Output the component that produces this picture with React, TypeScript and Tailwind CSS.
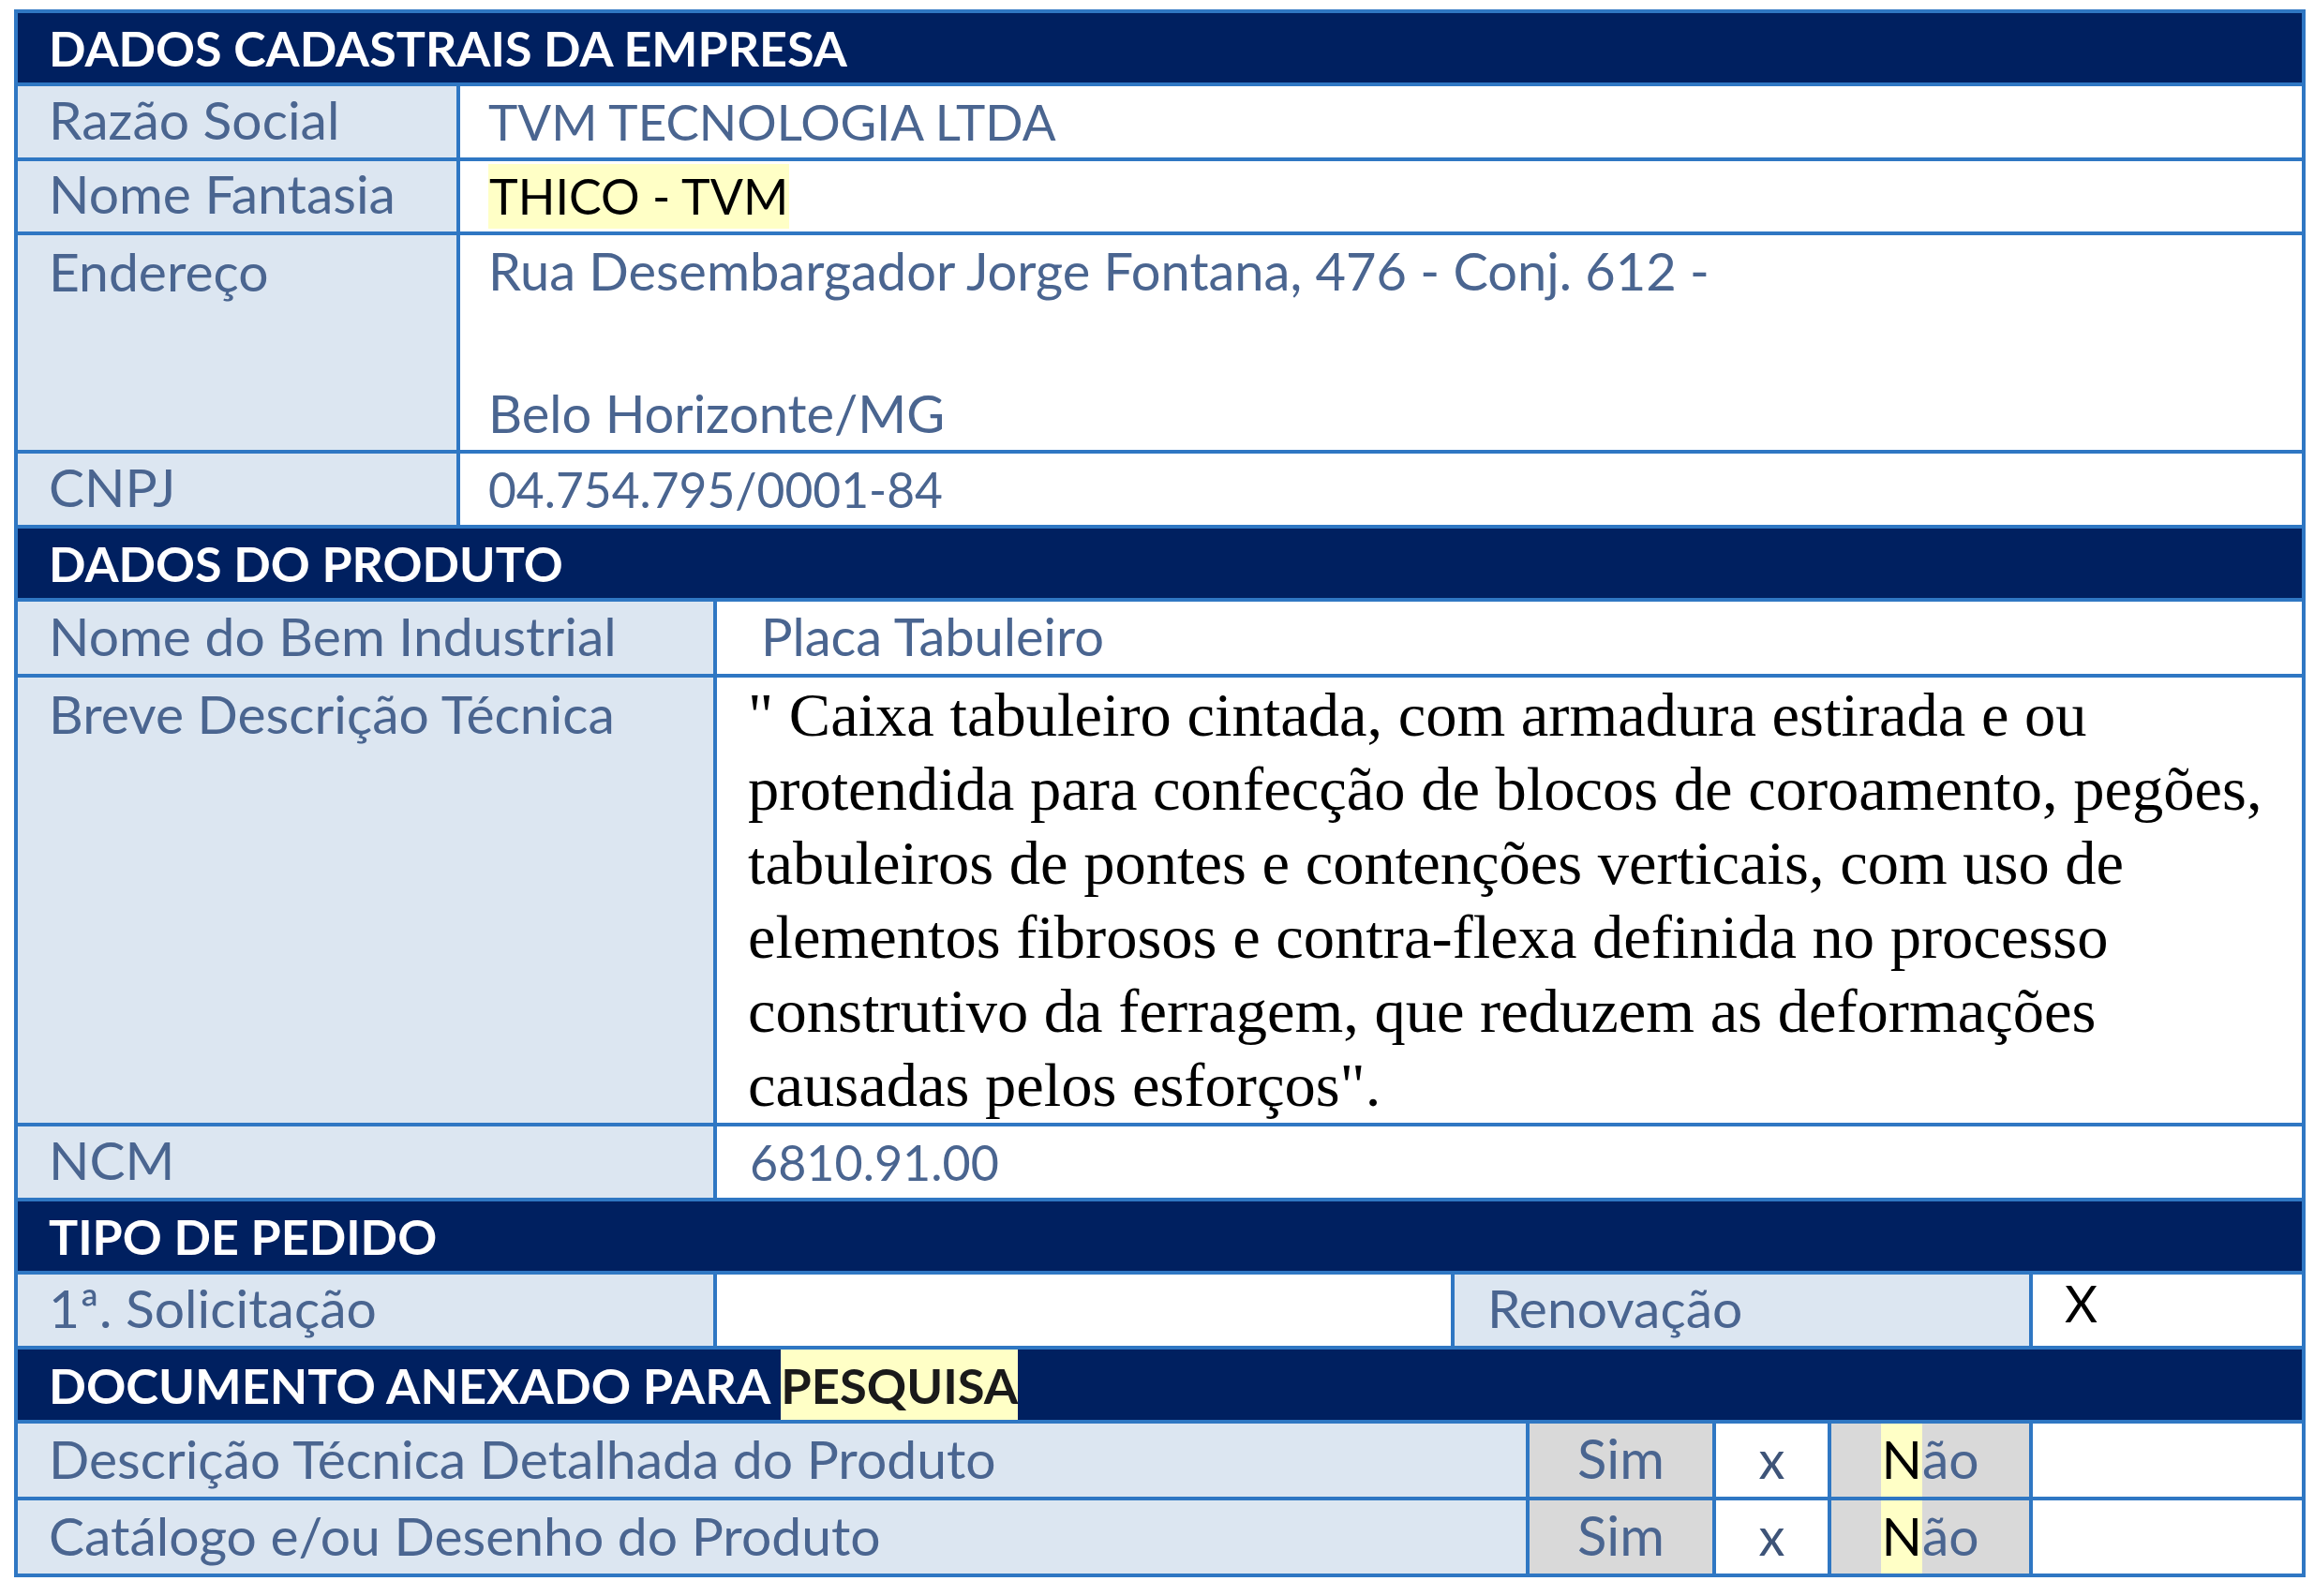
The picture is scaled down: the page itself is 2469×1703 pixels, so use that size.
const descricao = [
  '" Caixa tabuleiro cintada, com armadura estirada e ou',
  'protendida para confecção de blocos de coroamento, pegões,',
  'tabuleiros de pontes e contenções verticais, com uso de',
  'elementos fibrosos e contra-flexa definida no processo',
  'construtivo da ferragem, que reduzem as deformações',
  'causadas pelos esforços".',
];

function SectionHeader({ children }: { children: React.ReactNode }) {
  return (
    <div className="h-[74px] bg-[#002060] flex items-end pl-[33px] pb-[11px] text-white text-[52px] font-bold leading-none">
      {children}
    </div>
  );
}

function Label({ children, className = '' }: { children: React.ReactNode; className?: string }) {
  return <div className={`bg-[#dce6f1] shrink-0 flex pl-[33px] text-[57px] ${className}`}>{children}</div>;
}

function Value({ children, className = '' }: { children?: React.ReactNode; className?: string }) {
  return <div className={`bg-white flex ${className}`}>{children}</div>;
}

export default function App() {
  return (
    <div className="min-h-screen bg-white pt-[10px] pl-[15px]">
      <div className="w-[2445px] bg-[#2f77c3] p-[4px] flex flex-col gap-[4px] font-['Lato',sans-serif] text-[56px] text-[#4a6590] leading-none">
        {/* Empresa */}
        <SectionHeader>DADOS CADASTRAIS DA EMPRESA</SectionHeader>

        <div className="flex gap-[4px] h-[76px]">
          <Label className="w-[468px] items-end pb-[12px]">Razão Social</Label>
          <Value className="flex-1 items-end pl-[30px] pb-[12px] text-[53px]">TVM TECNOLOGIA LTDA</Value>
        </div>

        <div className="flex gap-[4px] h-[75px]">
          <Label className="w-[468px] items-end pb-[12px]">Nome Fantasia</Label>
          <Value className="flex-1 pl-[30px] py-[3px]">
            <span className="bg-[#ffffc6] text-black text-[52px] flex items-end pb-[9px] px-[1px]">THICO - TVM</span>
          </Value>
        </div>

        <div className="flex gap-[4px] h-[229px]">
          <Label className="w-[468px] items-start leading-[76px]">Endereço</Label>
          <Value className="flex-1 flex-col pl-[30px] leading-[76px]">
            <span>Rua Desembargador Jorge Fontana, 476 - Conj. 612 -</span>
            <span>&nbsp;</span>
            <span>Belo Horizonte/MG</span>
          </Value>
        </div>

        <div className="flex gap-[4px] h-[76px]">
          <Label className="w-[468px] items-end pb-[12px]">CNPJ</Label>
          <Value className="flex-1 items-end pl-[30px] pb-[12px] text-[51.5px]">04.754.795/0001-84</Value>
        </div>

        {/* Produto */}
        <SectionHeader>DADOS DO PRODUTO</SectionHeader>

        <div className="flex gap-[4px] h-[77px]">
          <Label className="w-[742px] items-end pb-[12px]">Nome do Bem Industrial</Label>
          <Value className="flex-1 items-end pl-[47px] pb-[12px]">Placa Tabuleiro</Value>
        </div>

        <div className="flex gap-[4px] h-[475px]">
          <Label className="w-[742px] items-start leading-[76px]">Breve Descrição Técnica</Label>
          <Value className="flex-1 flex-col pl-[33px] font-['Liberation_Serif',serif] text-[66.5px] text-black leading-[79px]">
            {descricao.map((line) => (
              <span key={line} className="whitespace-nowrap">{line}</span>
            ))}
          </Value>
        </div>

        <div className="flex gap-[4px] h-[76px]">
          <Label className="w-[742px] items-end pb-[12px]">NCM</Label>
          <Value className="flex-1 items-end pl-[35px] pb-[12px] text-[52px]">6810.91.00</Value>
        </div>

        {/* Tipo */}
        <SectionHeader>TIPO DE PEDIDO</SectionHeader>

        <div className="flex gap-[4px] h-[76px]">
          <Label className="w-[742px] items-end pb-[12px]">1ª. Solicitação</Label>
          <Value className="w-[783px]" />
          <Label className="w-[613px] items-end pb-[12px] !pl-[35px]">Renovação</Label>
          <Value className="flex-1 items-end pl-[34px] pb-[18px] text-black text-[54px]">X</Value>
        </div>

        {/* Documentos */}
        <div className="h-[75px] bg-[#002060] flex items-stretch pl-[33px] text-white text-[52.5px] font-bold">
          <span className="flex items-end pb-[11px]">DOCUMENTO ANEXADO PARA&nbsp;</span>
          <span className="flex items-end pb-[11px] bg-[#ffffc6] text-[#1a1a1a]">PESQUISA</span>
        </div>

        {[
          'Descrição Técnica Detalhada do Produto',
          'Catálogo e/ou Desenho do Produto',
        ].map((doc) => (
          <div key={doc} className="flex gap-[4px] h-[78px]">
            <Label className="w-[1609px] items-end pb-[12px]">{doc}</Label>
            <div className="w-[195px] bg-[#d9d9d9] flex items-end justify-center pb-[12px] text-[58px]">Sim</div>
            <Value className="w-[119px] items-end justify-center pb-[12px] text-[#3e5478]">x</Value>
            <div className="w-[211px] bg-[#d9d9d9] flex justify-center text-[57px]">
              <span className="bg-[#ffffc6] text-black flex items-end pb-[12px]">N</span>
              <span className="flex items-end pb-[12px]">ão</span>
            </div>
            <Value className="flex-1" />
          </div>
        ))}
      </div>
    </div>
  );
}
